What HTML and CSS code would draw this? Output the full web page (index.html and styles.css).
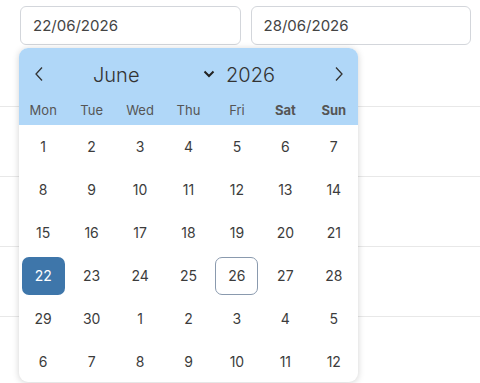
FILE: index.html
```html
<!DOCTYPE html>
<html lang="en">
<head>
  <meta charset="UTF-8" />
  <meta name="viewport" content="width=device-width, initial-scale=1.0"/>
  <title>Date range</title>
  <link rel="stylesheet" href="styles.css">
</head>
<body>
  <main>
    <div class="range">
      <input class="date-input" type="text" value="22/06/2026">
      <input class="date-input" type="text" value="28/06/2026">
    </div>

    <div class="rows">
      <div class="row"></div>
      <div class="row"></div>
      <div class="row"></div>
      <div class="row"></div>
    </div>

    <div class="picker">
      <div class="picker-head">
        <div class="nav">
          <span class="arrow">
            <svg width="10" height="16" viewBox="0 0 10 16"><path d="M8 1.5 2 8l6 6.5" fill="none" stroke="#333" stroke-width="1.3"/></svg>
          </span>
          <span class="month">June</span>
          <svg class="chevron" width="12" height="8" viewBox="0 0 12 8"><path d="M1.5 1.5 6 6l4.5-4.5" fill="none" stroke="#222" stroke-width="2"/></svg>
          <span class="year">2026</span>
          <span class="arrow next">
            <svg width="10" height="16" viewBox="0 0 10 16"><path d="M2 1.5 8 8l-6 6.5" fill="none" stroke="#333" stroke-width="1.3"/></svg>
          </span>
        </div>
        <div class="weekdays">
          <span>Mon</span><span>Tue</span><span>Wed</span><span>Thu</span><span>Fri</span>
          <span class="weekend">Sat</span><span class="weekend">Sun</span>
        </div>
      </div>
      <div class="days" id="days"></div>
    </div>
  </main>

  <script>
    const days = document.getElementById('days');
    const list = [];
    for (let d = 1; d <= 30; d++) list.push(d);
    for (let d = 1; d <= 12; d++) list.push(d);

    list.forEach((d, i) => {
      const cell = document.createElement('div');
      cell.className = 'day';
      const inner = document.createElement('span');
      inner.textContent = d;
      if (i === 21) inner.className = 'selected';
      if (i === 25) inner.className = 'range-end';
      cell.appendChild(inner);
      days.appendChild(cell);
    });
  </script>
</body>
</html>
```

FILE: styles.css
```css
body {
  margin: 0;
  background: #ffffff;
  font-family: "Inter", "Noto Sans", sans-serif;
  color: #333;
}

main {
  position: relative;
  height: 383px;
  overflow: hidden;
}

.range {
  display: flex;
  gap: 10px;
  padding: 6px 9px 0 20px;
}

.date-input {
  flex: 1;
  width: 0;
  height: 39px;
  box-sizing: border-box;
  border: 1px solid #d3d6db;
  border-radius: 6px;
  padding: 0 12px;
  font-family: inherit;
  font-size: 15px;
  color: #444;
  background: #fff;
}

.rows {
  margin-top: 61px;
}

.row {
  height: 69px;
  border-top: 1px solid #e8e8e8;
}

.picker {
  position: absolute;
  left: 19px;
  top: 48px;
  width: 339px;
  height: 334px;
  background: #fff;
  border-radius: 9px;
  box-shadow: 0 1px 7px rgba(0, 0, 0, 0.18);
  overflow: hidden;
}

.picker-head {
  background: #b0d7f8;
  height: 77px;
}

.nav {
  display: flex;
  align-items: center;
  height: 52px;
  padding: 0 14px 0 15px;
  font-size: 20px;
  font-weight: 300;
  color: #333;
}

.arrow {
  display: flex;
}

.next {
  margin-left: auto;
}

.month {
  width: 110px;
  margin-left: 49px;
  padding-top: 2px;
}

.chevron {
  margin-right: 11px;
}

.year {
  padding-top: 2px;
}

.weekdays {
  display: grid;
  grid-template-columns: repeat(7, 1fr);
  text-align: center;
  font-size: 13px;
  color: #555;
  padding-top: 2px;
}

.weekdays .weekend {
  font-weight: 700;
}

.days {
  display: grid;
  grid-template-columns: repeat(7, 1fr);
  grid-auto-rows: 43px;
}

.day {
  display: flex;
  align-items: center;
  justify-content: center;
  font-size: 14px;
  color: #3c3c3c;
}

.day span {
  display: flex;
  align-items: center;
  justify-content: center;
  width: 43px;
  height: 38px;
  box-sizing: border-box;
  border-radius: 7px;
}

.day .selected {
  background: #3e76aa;
  color: #fff;
}

.day .range-end {
  border: 1px solid #8a9aae;
}
```
